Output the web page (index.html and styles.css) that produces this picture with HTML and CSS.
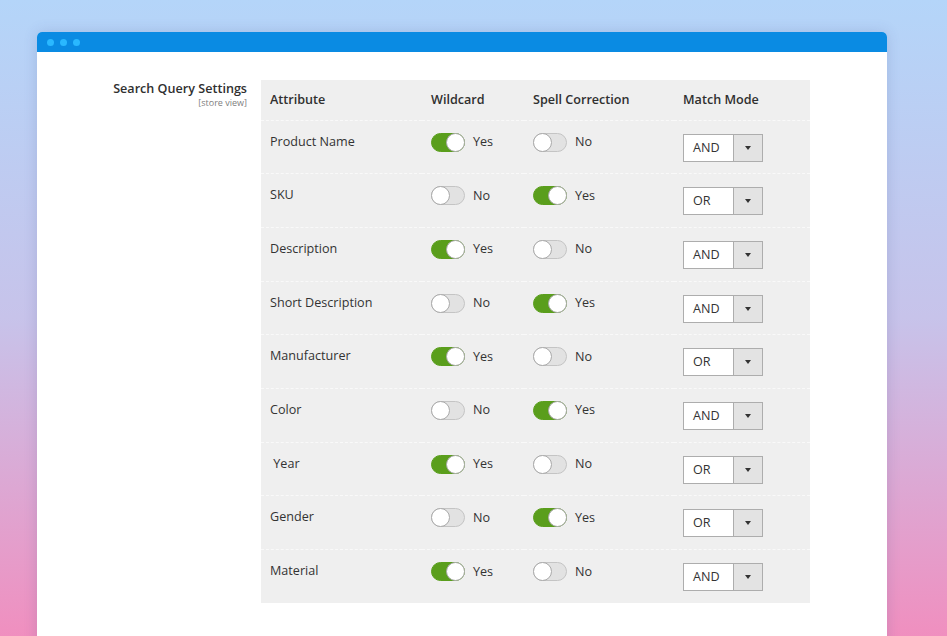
FILE: index.html
```html
<!DOCTYPE html>
<html lang="en">
<head>
  <meta charset="UTF-8" />
  <title>Search Query Settings</title>
  <link rel="stylesheet" href="styles.css">
</head>
<body>
  <div class="window">
    <div class="window-bar">
      <span class="dot"></span><span class="dot"></span><span class="dot"></span>
    </div>
    <div class="window-body">
      <div class="field-label">
        <div class="label-title">Search Query Settings</div>
        <div class="label-scope">[store view]</div>
      </div>
      <table class="settings">
        <thead>
          <tr>
            <th class="col-attr">Attribute</th>
            <th class="col-wild">Wildcard</th>
            <th class="col-spell">Spell Correction</th>
            <th class="col-mode">Match Mode</th>
          </tr>
        </thead>
        <tbody id="rows"></tbody>
      </table>
    </div>
  </div>

  <script>
    const rows = [
      ["Product Name", true, false, "AND"],
      ["SKU", false, true, "OR"],
      ["Description", true, false, "AND"],
      ["Short Description", false, true, "AND"],
      ["Manufacturer", true, false, "OR"],
      ["Color", false, true, "AND"],
      ["\u00a0Year", true, false, "OR"],
      ["Gender", false, true, "OR"],
      ["Material", true, false, "AND"]
    ];

    function toggle(on) {
      return '<label class="switch' + (on ? ' on' : '') + '"><span class="knob"></span></label>' +
        '<span class="switch-text">' + (on ? "Yes" : "No") + '</span>';
    }

    const body = document.getElementById("rows");
    body.innerHTML = rows.map(r =>
      '<tr>' +
        '<td>' + r[0] + '</td>' +
        '<td><div class="cell-switch">' + toggle(r[1]) + '</div></td>' +
        '<td><div class="cell-switch">' + toggle(r[2]) + '</div></td>' +
        '<td><div class="select"><span class="select-value">' + r[3] + '</span><span class="select-btn"></span></div></td>' +
      '</tr>'
    ).join("");
  </script>
</body>
</html>
```

FILE: styles.css
```css
* {
  box-sizing: border-box;
}

body {
  margin: 0;
  height: 636px;
  overflow: hidden;
  font-family: "Open Sans", "Noto Sans", sans-serif;
  background: linear-gradient(180deg, #b4d5f9 0%, #c7c3ea 50%, #f08fbf 100%);
  color: #333;
}

.window {
  margin: 32px 0 0 37px;
  width: 850px;
  height: 620px;
  background: #fff;
  border-radius: 5px 5px 0 0;
  box-shadow: 0 0 14px rgba(60, 80, 140, 0.18);
  overflow: hidden;
}

.window-bar {
  height: 20px;
  background: #0a8be3;
  display: flex;
  align-items: center;
  gap: 6px;
  padding-left: 10px;
}

.dot {
  width: 7px;
  height: 7px;
  border-radius: 50%;
  background: #2ab8ff;
}

.window-body {
  display: flex;
  align-items: flex-start;
  gap: 14px;
  padding-top: 28px;
}

.field-label {
  width: 210px;
  text-align: right;
  padding-top: 1px;
}

.label-title {
  font-size: 12.6px;
  font-weight: 600;
  line-height: 15px;
  color: #303030;
}

.label-scope {
  margin-top: 1px;
  font-size: 9px;
  line-height: 11px;
  color: #808080;
}

.settings {
  width: 549px;
  border-collapse: collapse;
  background: #efefef;
  font-size: 12.6px;
}

.settings th {
  height: 40px;
  text-align: left;
  font-weight: 600;
  padding: 0 9px;
  color: #303030;
}

.settings td {
  height: 53.7px;
  vertical-align: top;
  padding: 12px 9px 0;
  line-height: 18px;
  border-top: 1px dashed #f9f9f9;
}

.col-attr { width: 161px; }
.col-wild { width: 102px; }
.col-spell { width: 150px; }

.cell-switch {
  display: flex;
  align-items: center;
  gap: 8px;
  height: 19px;
}

.switch {
  position: relative;
  width: 34px;
  height: 19px;
  border-radius: 10px;
  background: #e2e2e2;
  border: 1px solid #c4c4c4;
}

.switch .knob {
  position: absolute;
  top: -1px;
  left: -1px;
  width: 19px;
  height: 19px;
  border-radius: 50%;
  background: #fff;
  border: 1px solid #a9a9a9;
}

.switch.on {
  background: #5a9e1c;
  border-color: #5a9e1c;
}

.switch.on .knob {
  left: auto;
  right: -1px;
}

.switch-text {
  font-size: 12.6px;
}

.select {
  display: flex;
  width: 80px;
  height: 28px;
  margin-top: 1px;
  border: 1px solid #adadad;
  background: #fff;
}

.select-value {
  flex: 1;
  padding-left: 9px;
  line-height: 26px;
  font-size: 12.6px;
}

.select-btn {
  position: relative;
  width: 29px;
  background: #e3e3e3;
  border-left: 1px solid #adadad;
}

.select-btn::after {
  content: "";
  position: absolute;
  left: 11px;
  top: 11px;
  border-left: 3.5px solid transparent;
  border-right: 3.5px solid transparent;
  border-top: 4px solid #333;
}
```
